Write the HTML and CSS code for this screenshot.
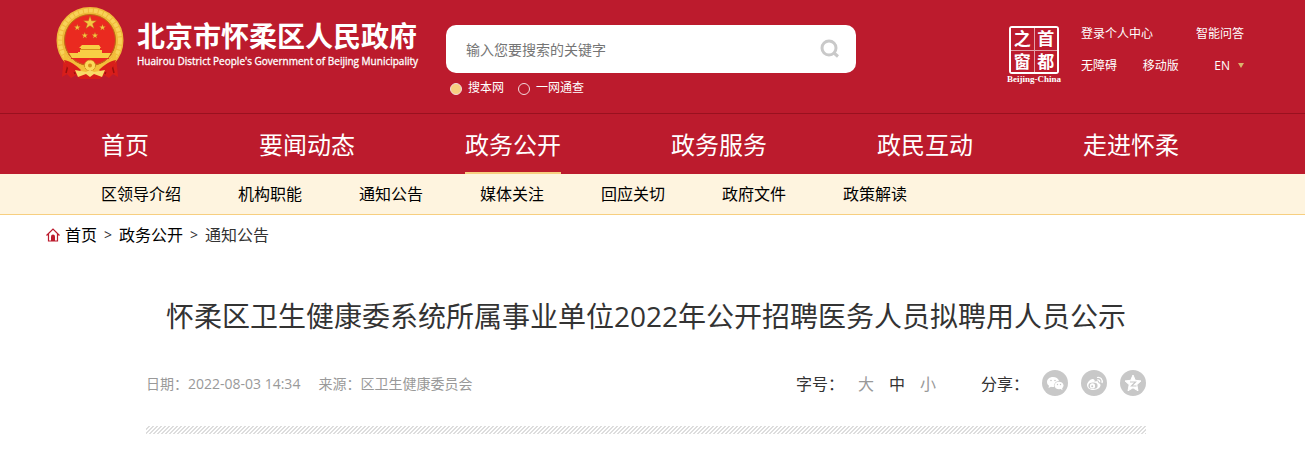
FILE: index.html
```html
<!DOCTYPE html>
<html lang="zh-CN">
<head>
  <meta charset="UTF-8">
  <meta name="viewport" content="width=device-width, initial-scale=1.0">
  <title>怀柔区卫生健康委系统所属事业单位2022年公开招聘医务人员拟聘用人员公示</title>
  <link rel="stylesheet" href="styles.css">
</head>
<body>
  <header class="header">
    <div class="wrap header-inner">
      <a class="logo" href="#">
        <svg class="emblem" width="68" height="72" viewBox="0 0 68 72" aria-hidden="true">
          <path d="M8 48 L6 70 L11 67 L15 71 L20 68 L24 72 H44 L48 68 L53 71 L57 67 L62 70 L60 48Z" fill="#d81e1a"/>
          <path d="M12 58 L10 66 M17 60 L19 67 M56 58 L58 66 M51 60 L49 67" stroke="#99100f" stroke-width="1.5"/>
          <circle cx="34" cy="33.5" r="29.5" fill="none" stroke="#efb93a" stroke-width="8"/>
          <circle cx="34" cy="33.5" r="30" fill="none" stroke="#f8d258" stroke-width="4" stroke-dasharray="4 1"/>
          <circle cx="34" cy="33" r="25.5" fill="#ea2a20" stroke="#bd7413"/>
          <g fill="#f5c842" stroke="#b5651a" stroke-width="0.4">
            <path id="star" d="M34 9 L35.6 13.8 L40.6 13.8 L36.6 16.8 L38.1 21.6 L34 18.7 L29.9 21.6 L31.4 16.8 L27.4 13.8 L32.4 13.8Z"/>
            <use href="#star" transform="translate(5.3 13) scale(.47)"/>
            <use href="#star" transform="translate(30.5 13) scale(.47)"/>
            <use href="#star" transform="translate(12.8 21) scale(.47)"/>
            <use href="#star" transform="translate(23 21) scale(.47)"/>
          </g>
          <path d="M26 38 H43 L45 41 H44 V43 H46 V45 H24 V43 H25 V41 H23Z M22 45 H46 V51 H22Z M13 46 H22 V45 H46 V46 H55 L52 51 H16Z" fill="#f8cf45"/>
          <path d="M24 42.500 H44" stroke="#d48e1c"/>
          <path d="M15 51.500 H53" stroke="#ea2a20"/>
          <path d="M9 44 C10 51 14 54 20 56 C25 57 28 59 30 62 H38 C40 59 43 57 48 56 C54 54 58 51 59 44 L61 52 C56 60 48 65 40 65 H28 C20 65 12 60 7 52Z" fill="#f3bf3a"/>
          <path d="M8 53 C14 54 20 58 25 63 L22 66 C15 65 10 61 8 53Z M60 53 C54 54 48 58 43 63 L46 66 C53 65 58 61 60 53Z" fill="#d81e1a"/>
          <circle cx="34" cy="58.5" r="5.500" fill="#fbd95a" stroke="#c98216" stroke-dasharray="2 1"/>
          <circle cx="34" cy="58.5" r="2" fill="#d98d1b"/>
          <path d="M19 63 L30 65 L34 63 L38 65 L49 63 L46 70 L38 67 L34 70 L30 67 L22 70Z" fill="#f9dc68"/>
        </svg>
        <span class="logo-text">
          <strong>北京市怀柔区人民政府</strong>
          <span class="logo-en">Huairou District People's Government of Beijing Municipality</span>
        </span>
      </a>

      <form class="search">
        <div class="search-box">
          <input type="text" placeholder="输入您要搜索的关键字" aria-label="搜索">
          <button type="submit" aria-label="搜索">
            <svg width="20" height="20" viewBox="0 0 20 20" fill="none" stroke="#c9c9c9" stroke-width="3">
              <circle cx="9" cy="9" r="7"/>
              <path d="M14 14 L18 17.5"/>
            </svg>
          </button>
        </div>
        <div class="search-type">
          <label><input type="radio" name="type" checked>搜本网</label>
          <label><input type="radio" name="type">一网通查</label>
        </div>
      </form>

      <a class="seal" href="#">
        <span class="seal-box">
          <span>之</span><span>首</span>
          <span>窗</span><span>都</span>
        </span>
        <span class="seal-name">Beijing-China</span>
      </a>

      <div class="links">
        <div class="links-row">
          <a href="#">登录个人中心</a>
          <a href="#">智能问答</a>
        </div>
        <div class="links-row">
          <a href="#">无障碍</a>
          <a class="mobile" href="#">移动版</a>
          <a class="lang" href="#">EN<i></i></a>
        </div>
      </div>
    </div>
  </header>

  <nav class="nav">
    <div class="wrap nav-list">
      <a href="#">首页</a>
      <a href="#">要闻动态</a>
      <a class="on" href="#">政务公开</a>
      <a href="#">政务服务</a>
      <a href="#">政民互动</a>
      <a href="#">走进怀柔</a>
    </div>
  </nav>

  <nav class="subnav">
    <div class="wrap subnav-list">
      <a href="#">区领导介绍</a>
      <a href="#">机构职能</a>
      <a href="#">通知公告</a>
      <a href="#">媒体关注</a>
      <a href="#">回应关切</a>
      <a href="#">政府文件</a>
      <a href="#">政策解读</a>
    </div>
  </nav>

  <main class="main">
    <div class="wrap crumbs">
      <svg width="14" height="14" viewBox="0 0 14 14" aria-hidden="true">
        <path d="M0.5 7.5 L7 1 L13.5 7.5 M2.5 6 V13 H11.5 V6" fill="none" stroke="#bc1b2d" stroke-width="1.2"/>
        <path d="M5 13 V8.5 A2 2 0 0 1 9 8.5 V13Z" fill="#bc1b2d"/>
      </svg>
      <a href="#">首页</a>
      <span class="arrow">&gt;</span>
      <a href="#">政务公开</a>
      <span class="arrow">&gt;</span>
      <span>通知公告</span>
    </div>

    <article class="article">
      <h1>怀柔区卫生健康委系统所属事业单位2022年公开招聘医务人员拟聘用人员公示</h1>
      <div class="info">
        <div class="source">
          <span>日期：2022-08-03 14:34</span>
          <span>来源：<a href="#">区卫生健康委员会</a></span>
        </div>
        <div class="tools">
          <span class="size-label">字号：</span>
          <button type="button">大</button>
          <button type="button" class="on">中</button>
          <button type="button">小</button>
          <span class="share-label">分享：</span>
          <a class="share" href="#" aria-label="微信">
            <svg width="26" height="26" viewBox="0 0 26 26">
              <circle cx="13" cy="13" r="13" fill="#c8c8c8"/>
              <path d="M11 7 C7.500 7 5 9.200 5 12 C5 13.600 5.800 14.900 7 15.800 L6.500 18 L9 16.700 C9.900 17 11 17 12 16.900 C11.500 13.500 14 11 17 10.900 C16.300 8.600 14 7 11 7Z" fill="#fff"/>
              <ellipse cx="17" cy="15.500" rx="4.500" ry="3.800" fill="#fff"/>
              <path d="M18 18.500 L20.500 20.300 L20 17.500Z" fill="#fff"/>
              <g fill="#c8c8c8"><circle cx="9" cy="10.500" r=".8"/><circle cx="13" cy="10.500" r=".8"/><circle cx="15.500" cy="14.500" r=".7"/><circle cx="18.500" cy="14.500" r=".7"/></g>
            </svg>
          </a>
          <a class="share" href="#" aria-label="微博">
            <svg width="26" height="26" viewBox="0 0 26 26">
              <circle cx="13" cy="13" r="13" fill="#c8c8c8"/>
              <path d="M12 9 C10 8.500 6 12 6 15 C6 18 9 20 12.500 20 C16.500 20 19.500 17.500 19.500 15.300 C19.500 13.800 18.300 13.200 17.300 13 C17.800 11.500 16.500 10.700 13.500 11.800 C14 10.500 13.500 9.300 12 9Z" fill="#fff"/>
              <ellipse cx="12" cy="15.700" rx="4.600" ry="3.200" fill="#c8c8c8"/>
              <circle cx="11.500" cy="15.900" r="2.600" fill="#fff"/>
              <circle cx="11.200" cy="16.200" r="1" fill="#c8c8c8"/>
              <path d="M16 7.500 C19.500 6.500 22 9.500 21 13 M16.300 10 C18 9.600 19 11 18.600 12.300" fill="none" stroke="#fff" stroke-width="1.300"/>
            </svg>
          </a>
          <a class="share" href="#" aria-label="QQ空间">
            <svg width="26" height="26" viewBox="0 0 26 26">
              <circle cx="13" cy="13" r="13" fill="#c8c8c8"/>
              <path d="M13 5 L15.300 10.300 L21 10.900 L16.800 14.700 L18 20.800 L13 17.800 L8 20.800 L9.200 14.700 L5 10.900 L10.700 10.300Z" fill="#fff" stroke="#fff" stroke-linejoin="round"/>
              <path d="M10 12 H15.500 L11.500 16 H16.500" fill="none" stroke="#c8c8c8" stroke-width="1.200"/>
            </svg>
          </a>
        </div>
      </div>
      <div class="stripes"></div>
    </article>
  </main>
</body>
</html>
```
FILE: styles.css
```css
* {
  box-sizing: border-box;
}

body {
  margin: 0;
  background: #ffffff;
  color: #333333;
  font-family: "Open Sans", "Noto Sans CJK SC", sans-serif;
  font-size: 16px;
}

a {
  color: inherit;
  text-decoration: none;
}

button {
  padding: 0;
  border: none;
  background: none;
  font-family: inherit;
  cursor: pointer;
}

.header,
.nav,
.subnav,
.main {
  padding-right: 13px;
}

.wrap {
  max-width: 1200px;
  margin: 0 auto;
}

/* header */
.header {
  background: #bc1b2d;
  color: #ffffff;
  border-bottom: 1px solid #99111f;
}

.header-inner {
  display: flex;
  align-items: flex-start;
  min-height: 113px;
  padding-left: 10px;
}

.logo {
  display: flex;
  width: 390px;
  padding-top: 7px;
}

.logo-text {
  display: flex;
  flex-direction: column;
  margin: 12px 0 0 13px;
  white-space: nowrap;
}

.logo-text strong {
  font-size: 28px;
  line-height: 34px;
}

.logo-en {
  font-size: 10px;
  line-height: 16px;
  -webkit-text-stroke: 0.3px #ffffff;
}

.search {
  width: 410px;
  padding-top: 25px;
}

.search-box {
  display: flex;
  align-items: center;
  height: 48px;
  padding: 0 16px 0 20px;
  background: #ffffff;
  border-radius: 10px;
}

.search-box input {
  flex: 1;
  padding: 0;
  border: none;
  outline: none;
  font-family: inherit;
  font-size: 14px;
}

.search-box input::placeholder {
  color: #757575;
}

.search-box button {
  display: flex;
}

.search-type {
  display: flex;
  gap: 14px;
  padding: 6px 4px;
  font-size: 12px;
  line-height: 18px;
}

.search-type label {
  display: flex;
  align-items: center;
  gap: 6px;
}

.search-type input {
  appearance: none;
  width: 12px;
  height: 12px;
  margin: 2px 0 0;
  border: 1px solid #f3d9dc;
  border-radius: 50%;
}

.search-type input:checked {
  background: #f7cf80;
}

.seal {
  display: flex;
  flex-direction: column;
  align-items: center;
  width: 56px;
  margin: 26px 19px 0 auto;
}

.seal-box {
  display: grid;
  grid-template-columns: 1fr 1fr;
  gap: 1px;
  width: 50px;
  height: 48px;
  border: 2px solid #ffffff;
  border-radius: 3px;
  background: #e3a0a7;
}

.seal-box span {
  background: #bc1b2d;
  font-size: 17px;
  font-weight: bold;
  line-height: 21px;
  text-align: center;
}

.seal-name {
  font-family: "Liberation Serif", serif;
  font-size: 9px;
  font-weight: bold;
  line-height: 10px;
}

.links {
  width: 165px;
  padding-top: 18px;
  font-size: 12px;
  line-height: 32px;
}

.links-row {
  display: flex;
  justify-content: space-between;
  padding-right: 2px;
}

.links-row .mobile {
  margin-right: 10px;
}

.lang i {
  display: inline-block;
  margin-left: 8px;
  border: 3px solid transparent;
  border-top: 5px solid #d9b46c;
  border-bottom: none;
  vertical-align: 2px;
}

/* navigation */
.nav {
  background: #bc1b2d;
}

.nav-list {
  display: flex;
  gap: 110px;
  padding-left: 55px;
}

.nav-list a {
  height: 60px;
  border-bottom: 2px solid transparent;
  color: #ffffff;
  font-size: 24px;
  line-height: 62px;
  white-space: nowrap;
}

.nav-list .on {
  border-color: #f7cf80;
}

.subnav {
  background: #fef4df;
  border-bottom: 1px solid #f7cf80;
}

.subnav-list {
  display: flex;
  gap: 57px;
  padding-left: 55px;
  color: #000000;
  line-height: 40px;
}

/* breadcrumb */
.crumbs {
  display: flex;
  align-items: center;
  line-height: 40px;
}

.crumbs a {
  color: #000000;
}

.crumbs svg {
  margin-right: 5px;
}

.arrow {
  width: 22px;
  font-size: 14px;
  text-align: center;
}

/* article */
.article {
  max-width: 1000px;
  margin: 0 auto;
  padding-top: 39px;
}

.article h1 {
  margin: 0;
  font-size: 28px;
  font-weight: normal;
  line-height: 44px;
  text-align: center;
}

.info {
  display: flex;
  justify-content: space-between;
  align-items: center;
  margin-top: 25px;
  height: 40px;
}

.source {
  display: flex;
  gap: 18px;
  color: #999999;
  font-size: 14px;
}

.tools {
  display: flex;
  align-items: center;
}

.tools button {
  margin-right: 15px;
  color: #999999;
  font-size: 16px;
}

.tools .on {
  color: #333333;
}

.size-label {
  margin-right: 14px;
}

.share-label {
  margin-left: 30px;
}

.share {
  display: flex;
  margin-left: 13px;
}

.stripes {
  height: 8px;
  margin-top: 23px;
  background: linear-gradient(135deg, #ffffff 0 30%, #dddddd 30% 50%, #ffffff 50% 80%, #dddddd 80%);
  background-size: 4px 4px;
}
```
